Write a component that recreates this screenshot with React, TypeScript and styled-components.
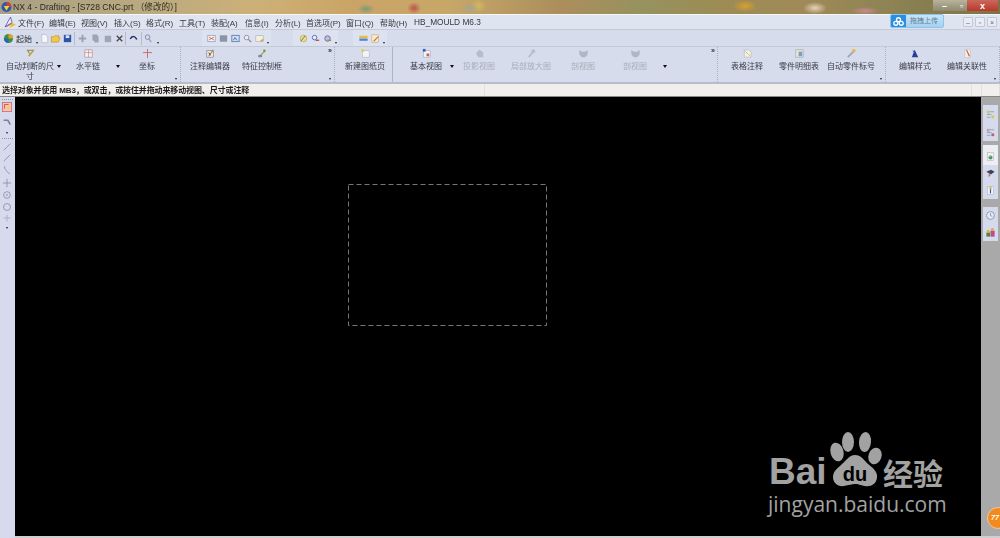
import * as React from 'react'
import styled, { createGlobalStyle } from 'styled-components'

const FONT = '"Liberation Sans", "Noto Sans CJK SC", sans-serif'

const Global = createGlobalStyle`
    html, body {
        margin: 0;
        padding: 0;
        background: #000;
    }
    * {
        box-sizing: border-box;
    }
`

const Page = styled.div`
    position: relative;
    width: 1000px;
    height: 538px;
    overflow: hidden;
    display: flex;
    flex-direction: column;
    font-family: ${FONT};
    font-size: 8px;
    color: #333;
    background: #d5dbec;
`

const TitleBar = styled.div`
    height: 14px;
    flex: none;
    display: flex;
    align-items: flex-start;
    padding-left: 1px;
    background:
        radial-gradient(ellipse 9px 5px at 366px 9px, #7d9a78, transparent),
        radial-gradient(ellipse 7px 6px at 414px 8px, #c0524a, transparent),
        radial-gradient(ellipse 10px 6px at 470px 8px, #a7a68a, transparent),
        radial-gradient(ellipse 8px 7px at 478px 6px, #d3bb5e, transparent),
        radial-gradient(ellipse 12px 6px at 745px 6px, #d99f2e, transparent),
        radial-gradient(ellipse 12px 6px at 815px 8px, #e6d2bb, transparent),
        radial-gradient(ellipse 14px 4px at 865px 11px, #c88a96, transparent),
        linear-gradient(90deg, #a9a083 0, #bbaa80 150px, #cdb077 260px, #caa466 350px, #c7a768 450px, #ac8e5c 560px, #96925f 640px, #9c8c54 720px, #a08a58 800px, #8b8253 900px, #7c7248 1000px);
`

const AppLogo = styled.svg`
    width: 11px;
    height: 12px;
    flex: none;
    margin-top: 1px;
`

const TitleText = styled.div`
    margin-left: 1px;
    font-size: 8.6px;
    line-height: 14px;
    color: #2b2b22;
    white-space: pre;
    filter: blur(0.25px);
`

const WindowButtons = styled.div`
    margin-left: auto;
    margin-right: 2px;
    display: flex;
    height: 11px;
`

const WinBtn = styled.div<{ $close?: boolean; $w: number }>`
    width: ${props => props.$w}px;
    height: 11px;
    display: flex;
    align-items: center;
    justify-content: center;
    color: #fff;
    font-size: 9px;
    font-weight: bold;
    background: ${props => props.$close
        ? 'linear-gradient(#c9695a, #b8392a)'
        : 'linear-gradient(#b8b39c, #8c8a70)'};
`

const MenuBar = styled.div`
    height: 16px;
    flex: none;
    display: flex;
    align-items: center;
    padding-left: 4px;
    background: #dfe4f1;
    border-top: 1px solid #f5f6f6;
    border-bottom: 1px solid #c5cad8;
`

const MenuLogo = styled.svg`
    width: 13px;
    height: 13px;
    flex: none;
    margin-right: 1px;
`

const MenuItem = styled.span<{ $w: number }>`
    width: ${props => props.$w}px;
    flex: none;
    white-space: nowrap;
    color: #34383f;
    filter: blur(0.2px);
`

const PluginItem = styled(MenuItem)`
    font-size: 8.3px;
`

const MdiButtons = styled.div`
    margin-left: auto;
    margin-right: 3px;
    display: flex;
    gap: 2px;
`

const MdiBtn = styled.div`
    width: 10px;
    height: 10px;
    display: flex;
    align-items: center;
    justify-content: center;
    border: 1px solid #c2c8d8;
    border-radius: 1px;
    background: #e9ecf4;
    color: #667;
    font-size: 7px;
`

const QuickBar = styled.div`
    height: 17px;
    flex: none;
    display: flex;
    align-items: center;
    padding-left: 3px;
    background: #d6dcec;
    border-bottom: 1px solid #c3c9d9;
`

const QuickSlot = styled.div<{ $w: number; $light?: boolean }>`
    width: ${props => props.$w}px;
    height: 16px;
    flex: none;
    display: flex;
    align-items: center;
    justify-content: center;
    white-space: nowrap;
    background: ${props => props.$light ? '#dde2f0' : 'transparent'};
`

const QuickSep = styled.div`
    width: 1px;
    height: 13px;
    flex: none;
    background: #b4bacb;
`

const Caret = styled.div`
    width: 0;
    height: 0;
    flex: none;
    align-self: flex-end;
    margin-bottom: 2px;
    border-left: 1.5px solid transparent;
    border-right: 1.5px solid transparent;
    border-top: 2px solid #222;
`

const Ribbon = styled.div`
    height: 37px;
    flex: none;
    display: flex;
    background: #d6dcec;
    border-bottom: 2px solid #b9bdc9;
`

const Group = styled.div<{ $w: number; $pad?: number; $solid?: boolean }>`
    position: relative;
    width: ${props => props.$w}px;
    flex: none;
    display: flex;
    padding-left: ${props => props.$pad || 0}px;
    border-right: 1px ${props => props.$solid ? 'solid #b0b5c6' : 'dotted #a9afc0'};
`

const Tool = styled.div<{ $w: number; $off?: boolean }>`
    width: ${props => props.$w}px;
    flex: none;
    display: flex;
    flex-direction: column;
    align-items: center;
    padding-top: 1px;
    color: ${props => props.$off ? '#a9adb8' : '#383c44'};
`

const ToolLabel = styled.div`
    margin-top: 3px;
    line-height: 10px;
    font-size: 8px;
    text-align: center;
    filter: blur(0.2px);
`

const Drop = styled.div<{ $w: number }>`
    width: ${props => props.$w}px;
    flex: none;
    display: flex;
    justify-content: center;
    padding-top: 18px;

    &::before {
        content: '';
        width: 0;
        height: 0;
        border-left: 2.5px solid transparent;
        border-right: 2.5px solid transparent;
        border-top: 3px solid #111;
    }
`

const More = styled.div`
    position: absolute;
    right: 2px;
    top: 0;
    font-size: 7px;
    line-height: 8px;
    font-weight: bold;
    color: #333;
`

const Corner = styled.div`
    position: absolute;
    right: 3px;
    bottom: 2px;
    width: 0;
    height: 0;
    border-left: 1.5px solid transparent;
    border-right: 1.5px solid transparent;
    border-top: 2px solid #222;
`

const StatusBar = styled.div`
    height: 13px;
    flex: none;
    display: flex;
    background: #f1efeb;
    border-bottom: 1px solid #888;
`

const StatusText = styled.div`
    width: 485px;
    flex: none;
    padding-left: 2px;
    line-height: 13px;
    font-weight: bold;
    letter-spacing: -0.12px;
    color: #1c1c1c;
    border-right: 1px solid #e2e0dc;
    filter: blur(0.15px);
`

const StatusCell = styled.div<{ $w?: number }>`
    flex: ${props => props.$w ? 'none' : '1'};
    width: ${props => props.$w ? `${props.$w}px` : 'auto'};
    border-right: 1px solid #e2e0dc;
`

const Main = styled.div`
    flex: 1;
    min-height: 0;
    display: flex;
`

const LeftBar = styled.div`
    width: 15px;
    flex: none;
    display: flex;
    flex-direction: column;
    align-items: center;
    padding: 2px 1px 0 0;
    background: #d5dbec;
`

const BarDots = styled.div<{ $top?: number }>`
    width: 11px;
    height: 2px;
    flex: none;
    margin-top: ${props => props.$top || 0}px;
    margin-bottom: ${props => props.$top ? 1 : 0}px;
    border-top: 1px dotted #8f95a8;
`

const LeftSlot = styled.div<{ $h: number }>`
    width: 12px;
    height: ${props => props.$h}px;
    flex: none;
    display: flex;
    align-items: center;
    justify-content: center;
`

const Canvas = styled.div`
    position: relative;
    flex: 1;
    background: #000;
    border-bottom: 2px solid #cfcfcf;
`

const SheetOutline = styled.svg`
    position: absolute;
    left: 333px;
    top: 87px;
    width: 199px;
    height: 142px;
`

const RightBar = styled.div`
    position: relative;
    width: 19px;
    flex: none;
    display: flex;
    flex-direction: column;
    align-items: center;
    padding-top: 8px;
    background: #a9a9a9;
    border-bottom: 2px solid #cfcfcf;
`

const RightGroup = styled.div<{ $gap: number }>`
    width: 15px;
    flex: none;
    display: flex;
    flex-direction: column;
    align-items: center;
    margin-bottom: ${props => props.$gap}px;
    background: #d5dbec;
`

const RightSlot = styled.div<{ $light?: boolean; $h: number }>`
    width: 15px;
    height: ${props => props.$h}px;
    display: flex;
    align-items: center;
    justify-content: center;
    padding-top: ${props => props.$light ? 3 : 0}px;
    background: ${props => props.$light ? '#eceef4' : 'transparent'};
`

const Badge = styled.div`
    position: absolute;
    left: 6px;
    top: 410px;
    width: 22px;
    height: 22px;
    border-radius: 50%;
    border: 1px solid #f3c79a;
    background: #f28a1c;
    color: #fff;
    font-size: 7px;
    font-weight: bold;
    font-style: italic;
    line-height: 20px;
    padding-left: 3px;
`

const Upload = styled.div`
    position: absolute;
    left: 890px;
    top: 14px;
    width: 54px;
    height: 14px;
    display: flex;
    border-radius: 2px;
    overflow: hidden;
    background: linear-gradient(#c9e4f7, #a5d1f0);
    border: 1px solid #8cc3ea;
    color: #5a7f9a;
    font-size: 7px;
    line-height: 12px;
`

const UploadIcon = styled.div`
    width: 15px;
    flex: none;
    display: flex;
    align-items: center;
    justify-content: center;
    margin-right: 4px;
    background: #2a8fe0;
`

const Watermark = styled.div`
    position: absolute;
    left: 753px;
    top: 335px;
    width: 190px;
    color: #a2a2a2;
`

const LogoRow = styled.div`
    display: flex;
    align-items: flex-end;
    height: 55px;
`

const LogoWord = styled.div`
    width: 58px;
    flex: none;
    font-family: "Liberation Sans", sans-serif;
    font-weight: bold;
    font-size: 37px;
    line-height: 30px;
    margin-right: -4px;
    margin-left: 1px;
`

const Paw = styled.svg`
    width: 62px;
    height: 60px;
    flex: none;
    margin-bottom: -2px;
`

const LogoCn = styled.div`
    font-family: "Noto Sans CJK SC", sans-serif;
    font-weight: bold;
    font-size: 30px;
    line-height: 30px;
    white-space: nowrap;
    margin-left: -2px;
`

const LogoUrl = styled.div`
    margin-top: 5px;
    font-family: "Open Sans", sans-serif;
    font-size: 21px;
    line-height: 24px;
    white-space: nowrap;
`

const IconSvg = styled.svg<{ $s?: number; $off?: boolean }>`
    width: ${props => props.$s || 11}px;
    height: ${props => props.$s || 11}px;
    flex: none;
    opacity: ${props => props.$off ? 0.55 : 1};
    filter: blur(0.3px);
`

const icons: { [key: string]: React.ReactNode } = {
    start: <><circle cx="6" cy="6" r="5" fill="#3f8f3d" /><path d="M6 1a5 5 0 0 1 5 5H6z" fill="#e0a020" /><path d="M1 6h5v5a5 5 0 0 1-5-5z" fill="#2c62c0" /></>,
    doc: <path d="M3 1.5h4l2.5 2.5v6.5H3z" fill="#f4f6fb" stroke="#aab2c6" strokeWidth=".7" />,
    open: <path d="M1.5 4h3l1-1h4v2h1.5l-2 5H1.5z" fill="#f0c84a" stroke="#b58a20" strokeWidth=".6" />,
    save: <><rect x="2" y="2" width="8" height="8" fill="#2f55a8" /><rect x="4" y="2.5" width="4" height="3" fill="#dde5f5" /></>,
    cross: <path d="M6 2v8M2 6h8" stroke="#9aa0b0" strokeWidth="2" />,
    copy: <path d="M3 2h5v6H3zM5 4h4v6H5z" fill="#a3a9b8" stroke="#9299aa" strokeWidth=".5" />,
    paste: <rect x="3" y="3" width="7" height="7" fill="#9fa5b4" />,
    del: <path d="M3 3l6 6M9 3l-6 6" stroke="#444" strokeWidth="1.4" />,
    undo: <path d="M2.5 6.5C4 3 8 3 9.5 7" fill="none" stroke="#1d2f66" strokeWidth="1.6" />,
    link: <><circle cx="5" cy="4.5" r="2.5" fill="none" stroke="#7a88a8" /><path d="M6 6l3 4" stroke="#9aa4bc" strokeWidth="1.4" /></>,
    frame: <><rect x="2" y="2.5" width="8" height="7" fill="#f5f6fa" stroke="#7a90c0" strokeWidth=".7" /><path d="M3.5 4.5l5 3M8.5 4.5l-5 3" stroke="#d85a30" /></>,
    grey: <rect x="2" y="2.5" width="8" height="7" fill="#8b93a6" />,
    view: <><rect x="2" y="2.5" width="8" height="7" fill="#cfe0f5" stroke="#4a6aa8" strokeWidth=".8" /><path d="M3.5 8l2-3 2 3" fill="none" stroke="#4a6aa8" /></>,
    zoom: <><circle cx="5" cy="5" r="2.5" fill="#e8edf6" stroke="#8a90a0" /><path d="M7 7l3 3" stroke="#888" strokeWidth="1.4" /></>,
    sheet: <><rect x="2" y="3" width="8" height="6" fill="#f6f1dd" stroke="#9aa4bc" strokeWidth=".6" /><path d="M6 9l4-3v3z" fill="#e0a040" /></>,
    pref1: <><circle cx="6" cy="6" r="3.5" fill="#f3e08a" stroke="#9c8a3a" strokeWidth=".6" /><path d="M3 9l5-6" stroke="#5a7a30" /></>,
    pref2: <><circle cx="5" cy="5" r="2.5" fill="#e8edf6" stroke="#4a6ac0" /><path d="M6 8h4" stroke="#c05050" strokeWidth="1.5" /></>,
    pref3: <><circle cx="6" cy="6" r="3" fill="#b8c4dc" stroke="#6070a0" /><path d="M6 8h4" stroke="#c08040" strokeWidth="1.4" /></>,
    bars: <><rect x="1.5" y="3" width="9" height="2.5" fill="#e0c040" /><rect x="1.5" y="6" width="9" height="2.5" fill="#5a80c8" /></>,
    pencil: <><rect x="2" y="2" width="7" height="8" fill="#f6ecd0" stroke="#c0a070" strokeWidth=".6" /><path d="M4 9l5-5" stroke="#d07040" strokeWidth="1.2" /></>,
    auto: <><path d="M2 2.5h8" stroke="#8a7a30" strokeWidth="1" /><path d="M4 9l5-6" stroke="#c0a030" strokeWidth="1.6" /><path d="M3 3l2 3" stroke="#507030" /></>,
    hchain: <><rect x="2" y="2" width="8" height="8" fill="#f1f1f4" stroke="#b08a90" strokeWidth=".7" /><path d="M6 2v8M2 5h8" stroke="#c07070" strokeWidth=".6" /></>,
    coord: <path d="M6 1v10M1 5h10" stroke="#c85a5a" strokeWidth=".9" />,
    note: <><rect x="2" y="3" width="7" height="7" fill="#eef0f5" stroke="#777" strokeWidth=".7" /><path d="M4 9l5-7" stroke="#c0752a" strokeWidth="1.2" /><path d="M4 5l2 3" stroke="#333" /></>,
    fcf: <><path d="M2 10l7-7" stroke="#c0a030" strokeWidth="1.4" /><rect x="1.5" y="7.5" width="4" height="2.5" fill="#6a8ac0" /><circle cx="8" cy="3" r="1.3" fill="#6a9a40" /></>,
    newsheet: <><rect x="2.5" y="3" width="7.5" height="7" fill="#f4f5f0" stroke="#aab2c6" strokeWidth=".6" /><circle cx="3" cy="3" r="1.6" fill="#e8c840" /></>,
    base: <><rect x="2.5" y="3" width="7.5" height="7" fill="#f2f4fa" stroke="#9aa4c0" strokeWidth=".6" /><rect x="2" y="1" width="3" height="3" fill="#3560b8" /><rect x="6" y="6" width="3" height="3" fill="#d8603a" /></>,
    proj: <path d="M6 1.5l4 3.5v5H5L2 6z" fill="#9ca2af" />,
    detail: <><circle cx="8" cy="3.5" r="2.2" fill="#a0a6b3" /><path d="M7 5L3 10" stroke="#a0a6b3" strokeWidth="2" /></>,
    section: <path d="M1.5 2l2.5 2h4l2.5-2V7L8 10H4L1.5 7z" fill="#9298a6" />,
    table: <><path d="M2.5 2h5l2.5 2.5V10H2.5z" fill="#f4f2d8" stroke="#a8aec6" strokeWidth=".6" /><path d="M3 3l6 6" stroke="#a0a080" strokeWidth=".6" /></>,
    parts: <><rect x="2" y="2" width="8" height="8" fill="#eee9c0" stroke="#97a5bd" strokeWidth=".7" /><rect x="5" y="4" width="4" height="5" fill="#70a0d8" /></>,
    balloon: <><path d="M2 10l6-6" stroke="#a0a6b8" strokeWidth="2" /><circle cx="8.5" cy="3" r="2" fill="#e8b840" /></>,
    style: <><path d="M5 2l4 8H2z" fill="#2a3c9a" /><path d="M3 3l3 2" stroke="#2a3c9a" /></>,
    assoc: <><path d="M3 1.5h6v9H3z" fill="#f5efe6" stroke="#bbb" strokeWidth=".6" /><path d="M5 2l3 7" stroke="#c84a3a" strokeWidth="1.1" /></>,
    select: <><rect x=".5" y=".5" width="11" height="11" fill="#f6c7b0" stroke="#d8667a" /><path d="M3 3h5M3 3v5" stroke="#c44" /><path d="M6 6l4 1-2 1-1 2z" fill="#f0d020" /></>,
    pickArc: <path d="M2 4h5l3 5" fill="none" stroke="#7a8096" strokeWidth="1.8" />,
    line: <path d="M2 10l8-8" stroke="#7f869b" strokeWidth=".9" />,
    curve: <path d="M3 1.5c0 4 2 4 3 6s2 2.5 3.5 2.5" fill="none" stroke="#7f869b" strokeWidth=".9" />,
    plus: <path d="M6 1v10M1 6h10" stroke="#7f869b" strokeWidth=".9" />,
    target: <><circle cx="6" cy="6" r="4" fill="none" stroke="#7f869b" strokeWidth=".9" /><circle cx="6" cy="6" r="1" fill="#7f869b" /></>,
    ring: <circle cx="6" cy="6" r="4.2" fill="none" stroke="#7f869b" strokeWidth=".9" />,
    dim: <path d="M6 2v8M2 6h8" stroke="#a0a6b8" strokeWidth=".9" />,
    list1: <><path d="M2 2h3v3H2zM7 7h3v3H7z" fill="#d8c84a" /><path d="M2 6h5M5 3h5M2 9h4" stroke="#8090b0" strokeWidth=".8" /></>,
    list2: <><path d="M2 2h3v3H2z" fill="#c89ab0" /><path d="M7 7h3v3H7z" fill="#c06060" /><path d="M2 6h5M5 3h5M2 9h4" stroke="#8090b0" strokeWidth=".8" /></>,
    page: <><rect x="2.5" y="1.5" width="7" height="9" fill="#f4f3e6" stroke="#a8aec0" strokeWidth=".6" /><circle cx="6" cy="7" r="2.2" fill="#3a9a8a" /><circle cx="5.5" cy="5.5" r="1" fill="#d8b830" /></>,
    cap: <><path d="M1.5 4l5-2 4 2-4 3z" fill="#3c4458" /><path d="M4 6v4l2-2" fill="#c05a70" /></>,
    pin: <><rect x="2.5" y="1.5" width="7" height="9" fill="#eef0f8" stroke="#a8aec0" strokeWidth=".6" /><path d="M6 2v7" stroke="#3050a0" strokeWidth="1.2" /><circle cx="6" cy="3.5" r="1.3" fill="#e0c030" /></>,
    clock: <><circle cx="6" cy="6" r="4.3" fill="#e4e8f2" stroke="#8e96ac" /><path d="M6 3.5V6l2 1" stroke="#8e96ac" fill="none" /></>,
    users: <><rect x="1.5" y="6" width="4" height="4.5" fill="#4f8a3a" /><rect x="6" y="4" width="4.5" height="6.5" fill="#c04a8a" /><circle cx="8" cy="2.8" r="1.6" fill="#e0b030" /><circle cx="3.5" cy="4.5" r="1.4" fill="#e0b030" /></>,
}

const Icon = ({ name, size, off }: { name: string; size?: number; off?: boolean }) => (
    <IconSvg viewBox="0 0 12 12" $s={size} $off={off}>{icons[name]}</IconSvg>
)

const menus: [string, number][] = [
    ['文件(F)', 31], ['编辑(E)', 32], ['视图(V)', 33], ['插入(S)', 32], ['格式(R)', 33], ['工具(T)', 32],
    ['装配(A)', 34], ['信息(I)', 30], ['分析(L)', 31], ['首选项(P)', 40], ['窗口(Q)', 34], ['帮助(H)', 34],
]

type QuickEntry = { icon?: string; w: number; sep?: boolean; caret?: boolean; light?: boolean }

const quick: QuickEntry[] = [
    { icon: 'doc', w: 11 }, { icon: 'open', w: 11 }, { icon: 'save', w: 13 }, { sep: true, w: 1 },
    { icon: 'cross', w: 14 }, { icon: 'copy', w: 12 }, { icon: 'paste', w: 12 }, { icon: 'del', w: 12 }, { sep: true, w: 1 },
    { icon: 'undo', w: 15 }, { sep: true, w: 1 },
    { icon: 'link', w: 12 }, { caret: true, w: 8 },
    { w: 40 }, { w: 3, light: true },
    { icon: 'frame', w: 12, light: true }, { icon: 'grey', w: 12, light: true }, { icon: 'view', w: 12, light: true },
    { icon: 'zoom', w: 12, light: true }, { icon: 'sheet', w: 12, light: true }, { caret: true, w: 6, light: true },
    { w: 22 }, { w: 4, light: true },
    { icon: 'pref1', w: 12, light: true }, { icon: 'pref2', w: 12, light: true }, { icon: 'pref3', w: 12, light: true },
    { caret: true, w: 5, light: true },
    { w: 15 }, { w: 4, light: true },
    { icon: 'bars', w: 12, light: true }, { icon: 'pencil', w: 12, light: true }, { caret: true, w: 6, light: true },
]

const ToolItem = ({ icon, label, w, off }: { icon: string; label: string; w: number; off?: boolean }) => (
    <Tool $w={w} $off={off}>
        <Icon name={icon} off={off} />
        <ToolLabel>{label}</ToolLabel>
    </Tool>
)

const leftTools: [string, number][] = [
    ['line', 12], ['line', 10], ['curve', 14], ['plus', 12], ['target', 12], ['ring', 12], ['dim', 10],
]

export default function App() {
    return (
        <Page>
            <Global />
            <TitleBar>
                <AppLogo viewBox="0 0 12 12">
                    <circle cx="6" cy="6" r="5.5" fill="#2c58b0" />
                    <path d="M6 .5A5.5 5.5 0 0 1 11.5 6H6z" fill="#d8402c" />
                    <path d="M3 5l3 5 3-5z" fill="#f4d040" />
                </AppLogo>
                <TitleText>NX 4 - Drafting - [S728 CNC.prt （修改的）]</TitleText>
                <WindowButtons>
                    <WinBtn $w={23}>–</WinBtn>
                    <WinBtn $w={11}>▫</WinBtn>
                    <WinBtn $w={31} $close>x</WinBtn>
                </WindowButtons>
            </TitleBar>

            <MenuBar>
                <MenuLogo viewBox="0 0 12 12">
                    <path d="M1 10L6 1l1.5 5z" fill="#e8edf8" stroke="#4a4aa0" strokeWidth=".7" />
                    <path d="M7 6l4 2-6 3z" fill="#e8c040" />
                    <path d="M2 10l5-3" stroke="#c04848" strokeWidth=".8" />
                </MenuLogo>
                {menus.map(([label, w]) => <MenuItem key={label} $w={w}>{label}</MenuItem>)}
                <PluginItem $w={70}>HB_MOULD M6.3</PluginItem>
                <MdiButtons>
                    <MdiBtn>–</MdiBtn>
                    <MdiBtn>▫</MdiBtn>
                    <MdiBtn>×</MdiBtn>
                </MdiButtons>
            </MenuBar>

            <QuickBar>
                <Icon name="start" size={11} />
                <QuickSlot $w={20}>起始</QuickSlot>
                <QuickSlot $w={5}><Caret /></QuickSlot>
                {quick.map((q, i) => {
                    if (q.sep) return <QuickSep key={i} />
                    if (q.caret) return <QuickSlot key={i} $w={q.w} $light={q.light}><Caret /></QuickSlot>
                    if (!q.icon) return <QuickSlot key={i} $w={q.w} $light={q.light} />
                    return <QuickSlot key={i} $w={q.w} $light={q.light}><Icon name={q.icon} size={11} /></QuickSlot>
                })}
            </QuickBar>

            <Ribbon>
                <Group $w={181} $pad={5}>
                    <ToolItem icon="auto" label="自动判断的尺寸" w={50} />
                    <Drop $w={8} />
                    <ToolItem icon="hchain" label="水平链" w={50} />
                    <Drop $w={10} />
                    <ToolItem icon="coord" label="坐标" w={48} />
                    <Corner />
                </Group>
                <Group $w={154} $pad={3}>
                    <ToolItem icon="note" label="注释编辑器" w={52} />
                    <ToolItem icon="fcf" label="特征控制框" w={52} />
                    <More>»</More>
                    <Corner />
                </Group>
                <Group $w={58} $pad={5} $solid>
                    <ToolItem icon="newsheet" label="新建图纸页" w={50} />
                </Group>
                <Group $w={325} $pad={8}>
                    <ToolItem icon="base" label="基本视图" w={50} />
                    <Drop $w={2} />
                    <ToolItem icon="proj" label="投影视图" w={52} off />
                    <ToolItem icon="detail" label="局部放大图" w={52} off />
                    <ToolItem icon="section" label="剖视图" w={52} off />
                    <ToolItem icon="section" label="剖视图" w={52} off />
                    <Drop $w={8} />
                    <More>»</More>
                </Group>
                <Group $w={168} $pad={3}>
                    <ToolItem icon="table" label="表格注释" w={52} />
                    <ToolItem icon="parts" label="零件明细表" w={52} />
                    <ToolItem icon="balloon" label="自动零件标号" w={52} />
                    <Corner />
                </Group>
                <Group $w={114} $pad={3}>
                    <ToolItem icon="style" label="编辑样式" w={52} />
                    <ToolItem icon="assoc" label="编辑关联性" w={52} />
                    <Corner />
                </Group>
            </Ribbon>

            <StatusBar>
                <StatusText>选择对象并使用 MB3，或双击，或按住并拖动来移动视图、尺寸或注释</StatusText>
                <StatusCell />
                <StatusCell $w={10} />
                <StatusCell $w={18} />
            </StatusBar>

            <Main>
                <LeftBar>
                    <BarDots />
                    <LeftSlot $h={12}><Icon name="select" size={10} /></LeftSlot>
                    <LeftSlot $h={18}><Icon name="pickArc" size={10} /></LeftSlot>
                    <LeftSlot $h={5}><Caret /></LeftSlot>
                    <BarDots $top={2} />
                    {leftTools.map(([name, h], i) => (
                        <LeftSlot key={i} $h={h}><Icon name={name} size={10} /></LeftSlot>
                    ))}
                    <LeftSlot $h={8}><Caret /></LeftSlot>
                </LeftBar>
                <Canvas>
                    <SheetOutline viewBox="0 0 199 142">
                        <rect x=".5" y=".5" width="198" height="141" fill="none" stroke="#767676" strokeDasharray="5 3" />
                    </SheetOutline>
                    <Watermark>
                        <LogoRow>
                            <LogoWord>Bai</LogoWord>
                            <Paw viewBox="0 0 62 60">
                                <g fill="#a2a2a2">
                                    <ellipse cx="14" cy="23" rx="6.5" ry="9.5" transform="rotate(-15 14 23)" />
                                    <ellipse cx="25" cy="13" rx="6" ry="10" />
                                    <ellipse cx="42" cy="13" rx="6" ry="10" transform="rotate(5 42 13)" />
                                    <ellipse cx="52" cy="27" rx="6.5" ry="8.5" transform="rotate(20 52 27)" />
                                    <path d="M32 26c6 0 9 5 13 9 5 4 10 8 9 14-1 6-6 9-12 8-5-1-7-2-10-2s-6 1-11 2c-6 1-11-3-11-9 0-6 5-9 9-13 4-3 7-9 13-9z" />
                                </g>
                                <text x="32" y="52" textAnchor="middle" fontFamily="Liberation Sans, sans-serif" fontWeight="bold" fontSize="20" fill="#000">du</text>
                            </Paw>
                            <LogoCn>经验</LogoCn>
                        </LogoRow>
                        <LogoUrl>jingyan.baidu.com</LogoUrl>
                    </Watermark>
                </Canvas>
                <RightBar>
                    <RightGroup $gap={4}>
                        <RightSlot $h={18}><Icon name="list1" /></RightSlot>
                        <RightSlot $h={18}><Icon name="list2" /></RightSlot>
                    </RightGroup>
                    <RightGroup $gap={8}>
                        <RightSlot $h={20} $light><Icon name="page" /></RightSlot>
                        <RightSlot $h={17}><Icon name="cap" /></RightSlot>
                        <RightSlot $h={17}><Icon name="pin" /></RightSlot>
                    </RightGroup>
                    <RightGroup $gap={0}>
                        <RightSlot $h={17}><Icon name="clock" /></RightSlot>
                        <RightSlot $h={17}><Icon name="users" /></RightSlot>
                    </RightGroup>
                    <Badge>77</Badge>
                </RightBar>
            </Main>

            <Upload>
                <UploadIcon>
                    <svg width="11" height="9" viewBox="0 0 12 10">
                        <g fill="none" stroke="#fff" strokeWidth="1.5">
                            <circle cx="6" cy="3" r="2.2" />
                            <circle cx="3" cy="7" r="2.2" />
                            <circle cx="9" cy="7" r="2.2" />
                        </g>
                    </svg>
                </UploadIcon>
                拖拽上传
            </Upload>
        </Page>
    )
}
